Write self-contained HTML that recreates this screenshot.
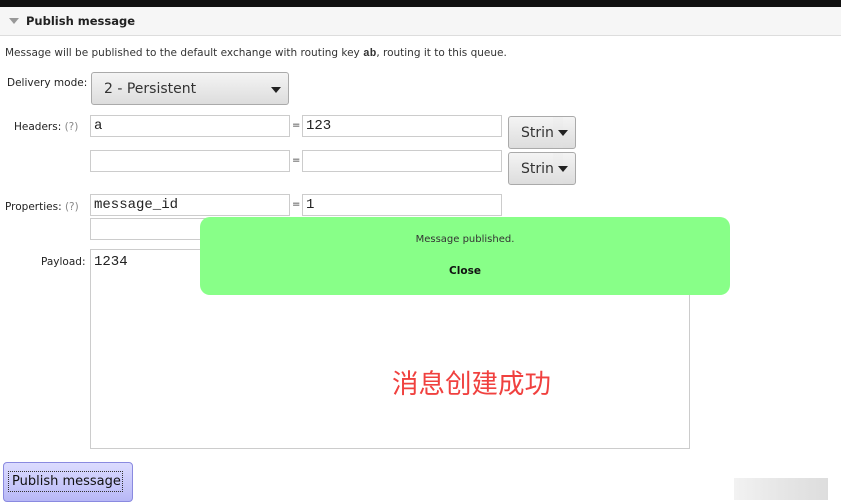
<!DOCTYPE html>
<html><head><meta charset="utf-8"><style>
body{margin:0;width:841px;height:504px;background:#fff;font-family:"DejaVu Sans","Liberation Sans",sans-serif;position:relative;overflow:hidden;font-size:11px;color:#333}
.a{position:absolute}
.inp{position:absolute;border:1px solid #ccc;background:#fff;box-sizing:border-box;font-family:"Liberation Mono",monospace;font-size:14px;color:#222;padding:2px 3px;line-height:16px}
.btn{position:absolute;box-sizing:border-box;border:1px solid #aaa;border-radius:3px;background:linear-gradient(#f4f4f4,#ddd);font-size:14px;color:#333}
.tri{position:absolute;width:0;height:0;border-left:5px solid transparent;border-right:5px solid transparent;border-top:6px solid #222}
.lbl{position:absolute;font-size:10.5px;color:#222;text-align:right}
</style></head><body>
<div class="a" style="left:0;top:0;width:841px;height:7px;background:#111"></div>
<div class="a" style="left:0;top:7px;width:841px;height:28px;background:#f6f6f6;border-bottom:1px solid #ddd"></div>
<div class="a" style="left:9px;top:18px;width:0;height:0;border-left:5px solid transparent;border-right:5px solid transparent;border-top:6px solid #999"></div>
<div class="a" style="left:26px;top:14px;font-weight:bold;font-size:11.5px;color:#222">Publish message</div>
<div class="a" style="left:5px;top:47px;font-size:10.5px;color:#333">Message will be published to the default exchange with routing key <b style="font-family:'Liberation Mono',monospace;font-size:11px">ab</b>, routing it to this queue.</div>
<div class="lbl" style="left:7px;top:77px">Delivery mode:</div>
<div class="btn" style="left:91px;top:72px;width:198px;height:33px"><span class="a" style="left:12px;top:8px">2 - Persistent</span><div class="tri" style="left:179px;top:14px"></div></div>
<div class="lbl" style="left:14px;top:121px">Headers: <span style="color:#888">(?)</span></div>
<div class="inp" style="left:90px;top:115px;width:200px;height:22px">a</div>
<div class="a" style="left:292px;top:120px;font-size:10px">=</div>
<div class="inp" style="left:302px;top:115px;width:200px;height:22px">123</div>
<div class="btn" style="left:508px;top:116px;width:68px;height:33px;overflow:hidden"><span class="a" style="left:12px;top:8px">Strin</span><div class="a" style="left:44px;top:0;width:10px;height:31px;background:linear-gradient(#f1f1f1,#dedede)"></div><div class="tri" style="left:49px;top:13px"></div></div>
<div class="inp" style="left:90px;top:150px;width:200px;height:22px"></div>
<div class="a" style="left:292px;top:155px;font-size:10px">=</div>
<div class="inp" style="left:302px;top:150px;width:200px;height:22px"></div>
<div class="btn" style="left:508px;top:152px;width:68px;height:33px;overflow:hidden"><span class="a" style="left:12px;top:8px">Strin</span><div class="a" style="left:44px;top:0;width:10px;height:31px;background:linear-gradient(#f1f1f1,#dedede)"></div><div class="tri" style="left:49px;top:13px"></div></div>
<div class="lbl" style="left:5px;top:201px">Properties: <span style="color:#888">(?)</span></div>
<div class="inp" style="left:90px;top:194px;width:200px;height:22px">message_id</div>
<div class="a" style="left:292px;top:199px;font-size:10px">=</div>
<div class="inp" style="left:302px;top:194px;width:200px;height:22px">1</div>
<div class="inp" style="left:90px;top:218px;width:200px;height:22px"></div>
<div class="lbl" style="left:41px;top:256px">Payload:</div>
<div class="inp" style="left:90px;top:249px;width:600px;height:200px;padding-top:4px">1234</div>
<div class="a" style="left:200px;top:217px;width:530px;height:78px;background:#88ff88;border-radius:10px"></div>
<div class="a" style="left:200px;top:234px;width:530px;text-align:center;font-size:10px;color:#333">Message published.</div>
<div class="a" style="left:200px;top:265px;width:530px;text-align:center;font-size:10.5px;font-weight:bold;color:#111">Close</div>
<div class="a" style="left:392px;top:362px;font-family:'Noto Sans CJK SC',sans-serif;font-size:26.5px;color:#f0413f">消息创建成功</div>
<div class="a" style="left:3px;top:462px;width:130px;height:40px;box-sizing:border-box;border:1px solid #8a8ae0;border-radius:4px;background:linear-gradient(#dcdcff,#b8b8f6)"></div>
<div class="a" style="left:8px;top:471px;width:115px;height:21px;border:1px dotted #333;box-sizing:border-box"></div>
<div class="a" style="left:12px;top:474px;font-size:13px;color:#111">Publish message</div>
<div class="a" style="left:734px;top:478px;width:94px;height:22px;background:linear-gradient(90deg,#f2f2f2,#e6e6e6,#ddd)"></div>
</body></html>
